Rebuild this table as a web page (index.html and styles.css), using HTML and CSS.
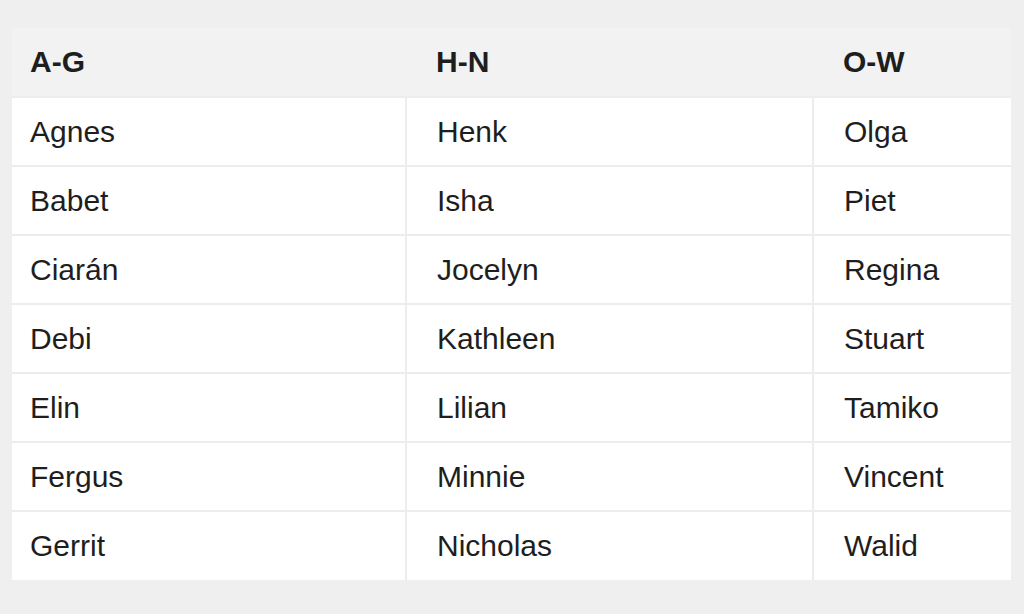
FILE: index.html
```html
<!DOCTYPE html>
<html>
<head>
<meta charset="utf-8">
<link rel="stylesheet" href="styles.css">
</head>
<body>
<table class="names">
  <thead>
    <tr><th class="c1">A-G</th><th class="c2">H-N</th><th class="c3">O-W</th></tr>
  </thead>
  <tbody>
    <tr><td class="c1">Agnes</td><td class="c2">Henk</td><td class="c3">Olga</td></tr>
    <tr><td class="c1">Babet</td><td class="c2">Isha</td><td class="c3">Piet</td></tr>
    <tr><td class="c1">Ciarán</td><td class="c2">Jocelyn</td><td class="c3">Regina</td></tr>
    <tr><td class="c1">Debi</td><td class="c2">Kathleen</td><td class="c3">Stuart</td></tr>
    <tr><td class="c1">Elin</td><td class="c2">Lilian</td><td class="c3">Tamiko</td></tr>
    <tr><td class="c1">Fergus</td><td class="c2">Minnie</td><td class="c3">Vincent</td></tr>
    <tr><td class="c1">Gerrit</td><td class="c2">Nicholas</td><td class="c3">Walid</td></tr>
  </tbody>
</table>
</body>
</html>
```
FILE: styles.css
```css
html, body {
  margin: 0;
  padding: 0;
  background: #efefef;
}
body {
  padding: 28px 13px 0 12px;
  font-family: "Liberation Sans", Arial, sans-serif;
  color: #1e1e1e;
}
.names {
  border-collapse: collapse;
  width: 999px;
  table-layout: fixed;
}
.names th, .names td {
  font-size: 30px;
  text-align: left;
  height: 69px;
  padding: 0;
  box-sizing: border-box;
  vertical-align: middle;
}
.names th {
  font-weight: bold;
  background: #f2f2f2;
}
.names td {
  background: #ffffff;
  border-top: 2px solid #ededed;
}
.names td + td {
  border-left: 2px solid #ededed;
}
.c1 { width: 394px; padding-left: 18px !important; }
.c2 { width: 407px; padding-left: 30px !important; }
.c3 { width: 198px; padding-left: 30px !important; }
```
